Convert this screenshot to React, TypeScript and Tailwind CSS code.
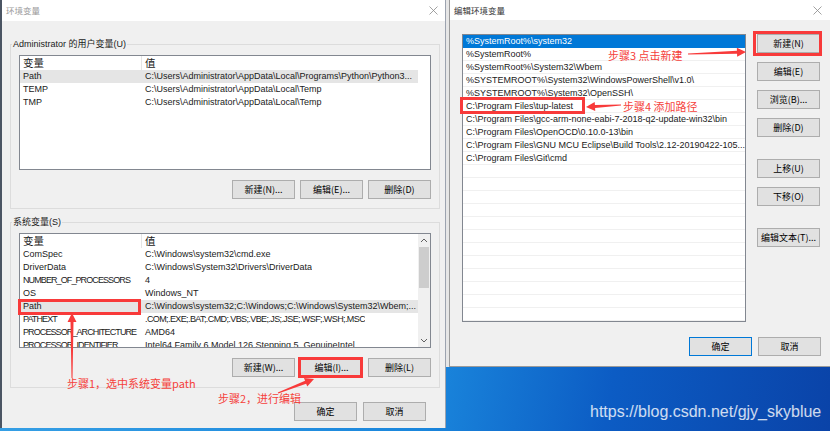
import React from "react";

type Row = [string, string];

const userVars: Row[] = [
  ["Path", "C:\\Users\\Administrator\\AppData\\Local\\Programs\\Python\\Python3..."],
  ["TEMP", "C:\\Users\\Administrator\\AppData\\Local\\Temp"],
  ["TMP", "C:\\Users\\Administrator\\AppData\\Local\\Temp"],
];

const sysVars: Row[] = [
  ["ComSpec", "C:\\Windows\\system32\\cmd.exe"],
  ["DriverData", "C:\\Windows\\System32\\Drivers\\DriverData"],
  ["NUMBER_OF_PROCESSORS", "4"],
  ["OS", "Windows_NT"],
  ["Path", "C:\\Windows\\system32;C:\\Windows;C:\\Windows\\System32\\Wbem;..."],
  ["PATHEXT", ".COM;.EXE;.BAT;.CMD;.VBS;.VBE;.JS;.JSE;.WSF;.WSH;.MSC"],
  ["PROCESSOR_ARCHITECTURE", "AMD64"],
  ["PROCESSOR_IDENTIFIER", "Intel64 Family 6 Model 126 Stepping 5, GenuineIntel"],
];

const pathList = [
  "%SystemRoot%\\system32",
  "%SystemRoot%",
  "%SystemRoot%\\System32\\Wbem",
  "%SYSTEMROOT%\\System32\\WindowsPowerShell\\v1.0\\",
  "%SYSTEMROOT%\\System32\\OpenSSH\\",
  "C:\\Program Files\\tup-latest",
  "C:\\Program Files\\gcc-arm-none-eabi-7-2018-q2-update-win32\\bin",
  "C:\\Program Files\\OpenOCD\\0.10.0-13\\bin",
  "C:\\Program Files\\GNU MCU Eclipse\\Build Tools\\2.12-20190422-105...",
  "C:\\Program Files\\Git\\cmd",
  ...Array(12).fill(""),
];

// all-caps strings render wider in Liberation Sans than in the dialog font
const tight = (s: string) => s.length > 6 && s === s.toUpperCase() && /[A-Z]/.test(s);

function Button({ label, primary }: { label: string; primary?: boolean }) {
  return (
    <div
      className={`flex h-[19px] w-[63px] shrink-0 items-center justify-center border bg-[#e1e1e1] font-['Noto_Sans_CJK_SC',sans-serif] text-[9px] leading-none text-black ${
        primary ? "border-[#0078d7]" : "border-[#adadad]"
      }`}
    >
      {label}
    </div>
  );
}

function CloseX() {
  return (
    <svg width="9" height="9" viewBox="0 0 9 9">
      <path d="M0.5 0.5L8.5 8.5M8.5 0.5L0.5 8.5" stroke="#8a8a8a" strokeWidth="0.8" />
    </svg>
  );
}

function Chevron({ up }: { up?: boolean }) {
  return (
    <svg width="8" height="5" viewBox="0 0 8 5">
      <path d={up ? "M1 4L4 1L7 4" : "M1 1L4 4L7 1"} stroke="#606060" strokeWidth="1" fill="none" />
    </svg>
  );
}

function Scrollbar() {
  return (
    <div className="flex w-[12px] shrink-0 flex-col bg-[#f0f0f0]">
      <div className="flex h-[13px] items-center justify-center">
        <Chevron up />
      </div>
      <div className="mx-[1px] h-[41px] bg-[#cdcdcd]" />
      <div className="flex-1" />
      <div className="flex h-[13px] items-center justify-center">
        <Chevron />
      </div>
    </div>
  );
}

function VarTable({ rows, selected, scroll }: { rows: Row[]; selected: number; scroll?: boolean }) {
  return (
    <div className="flex h-[115px] w-[412px] overflow-hidden border border-[#828790] bg-white">
      <div className="w-[398px] shrink-0">
        <div className="flex h-[14px] items-center font-['Noto_Sans_CJK_SC',sans-serif] text-[10.5px]">
          <div className="h-full w-[122px] border-r border-[#e5e5e5] pl-[3px] leading-[14px]">变量</div>
          <div className="pl-[3px] leading-[14px]">值</div>
        </div>
        {rows.map(([k, v], i) => (
          <div
            key={k}
            className={`flex h-[13px] items-center whitespace-nowrap leading-[13px] ${
              i === selected ? "bg-[#e5e5e5]" : ""
            }`}
          >
            <div className={`w-[122px] shrink-0 overflow-hidden pl-[3px] ${tight(k) ? "tracking-[-0.9px]" : ""}`}>
              {k}
            </div>
            <div className={`overflow-hidden pl-[3px] ${tight(v) ? "tracking-[-0.6px]" : ""}`}>{v}</div>
          </div>
        ))}
      </div>
      {scroll && <Scrollbar />}
    </div>
  );
}

function arrowPts(x1: number, y1: number, x2: number, y2: number) {
  const dx = x2 - x1;
  const dy = y2 - y1;
  const len = Math.hypot(dx, dy);
  const ux = dx / len;
  const uy = dy / len;
  const nx = -uy;
  const ny = ux;
  const head = 9;
  const hw = 4.5;
  const tail = 0.5;
  const neck = 1.5;
  const bx = x2 - ux * head;
  const by = y2 - uy * head;
  const pts = [
    [x1 + nx * tail, y1 + ny * tail],
    [bx + nx * neck, by + ny * neck],
    [bx + nx * hw, by + ny * hw],
    [x2, y2],
    [bx - nx * hw, by - ny * hw],
    [bx - nx * neck, by - ny * neck],
    [x1 - nx * tail, y1 - ny * tail],
  ];
  return pts.map((p) => p.join(",")).join(" ");
}

export default function App() {
  return (
    <div className="relative h-[431px] w-[830px] overflow-hidden bg-[linear-gradient(100deg,#3aa3e6_0%,#1a86dc_55%,#0c5cc4_75%,#0a43a8_100%)] font-['Liberation_Sans','Noto_Sans_CJK_SC',sans-serif] text-[9px] text-[#1a1a1a]">
      {/* 环境变量 window */}
      <div className="absolute left-0 top-0 flex h-[428px] w-[446px] flex-col border-l-2 border-r border-l-[#4b5563] border-r-[#9ca3af] bg-[#f0f0f0]">
        <div className="flex h-[21px] shrink-0 items-center justify-between bg-white pl-[4px] pr-[7px]">
          <span className="font-['Noto_Sans_CJK_SC',sans-serif] text-[8.5px] text-[#9a9a9a]">环境变量</span>
          <CloseX />
        </div>

        <div className="flex flex-col pl-[8px]">
          {/* user vars */}
          <div className="mt-[23px] flex w-[430px] flex-col border border-[#dcdcdc] px-[8px] pb-[9px]">
            <span className="-mt-[8px] ml-[-7px] w-fit bg-[#f0f0f0] px-[1px] leading-[14px]">
              Administrator 的用户变量(U)
            </span>
            <div className="mt-[4px]">
              <VarTable rows={userVars} selected={0} />
            </div>
            <div className="mt-[10px] flex justify-end gap-[5px]">
              <Button label="新建(N)..." />
              <Button label="编辑(E)..." />
              <Button label="删除(D)" />
            </div>
          </div>

          {/* system vars */}
          <div className="mt-[13px] flex w-[430px] flex-col border border-[#dcdcdc] px-[8px] pb-[10px]">
            <span className="-mt-[8px] ml-[-7px] w-fit bg-[#f0f0f0] px-[1px] leading-[14px]">系统变量(S)</span>
            <div className="mt-[4px]">
              <VarTable rows={sysVars} selected={4} scroll />
            </div>
            <div className="mt-[10px] flex justify-end gap-[5px]">
              <Button label="新建(W)..." />
              <Button label="编辑(I)..." />
              <Button label="删除(L)" />
            </div>
          </div>

          <div className="mt-[14px] flex w-[430px] justify-end gap-[6px] pr-[14px]">
            <Button label="确定" />
            <Button label="取消" />
          </div>
        </div>
      </div>

      {/* 编辑环境变量 window */}
      <div className="absolute left-[446px] top-0 flex h-[367px] w-[384px]">
        <div className="w-[3px] bg-[#e6e6e6]" />
        <div className="flex flex-1 flex-col border-b border-l border-[#9a9a9a] bg-[#f0f0f0]">
          <div className="flex h-[20px] shrink-0 items-center justify-between bg-white pl-[4px] pr-[8px]">
            <span className="font-['Noto_Sans_CJK_SC',sans-serif] text-[8.5px] text-[#333]">编辑环境变量</span>
            <CloseX />
          </div>
          <div className="flex gap-[11px] pl-[12px] pt-[14px]">
            <div className="h-[288px] w-[284px] overflow-hidden border border-[#828790] bg-white">
              {pathList.map((p, i) => (
                <div
                  key={i}
                  className={`h-[13px] overflow-hidden whitespace-nowrap border-b pl-[3px] leading-[12px] ${
                    i === 0 ? "border-[#0078d7] bg-[#0078d7] text-white" : "border-[#f0f0f0]"
                  }`}
                >
                  {p}
                </div>
              ))}
            </div>
            <div className="flex flex-col gap-[9px]">
              <Button label="新建(N)" />
              <Button label="编辑(E)" />
              <Button label="浏览(B)..." />
              <Button label="删除(D)" />
              <div className="mt-[13px]">
                <Button label="上移(U)" />
              </div>
              <Button label="下移(O)" />
              <div className="mt-[13px]">
                <Button label="编辑文本(T)..." />
              </div>
            </div>
          </div>
          <div className="mt-[15px] flex justify-end gap-[6px] pr-[9px]">
            <Button label="确定" primary />
            <Button label="取消" />
          </div>
        </div>
      </div>

      {/* annotations */}
      <div className="absolute left-[18px] top-[299px] h-[16px] w-[123px] border-[3px] border-[#f83a3a]" />
      <div className="absolute left-[298px] top-[357px] h-[21px] w-[65px] border-[3px] border-[#f83a3a]" />
      <div className="absolute left-[460px] top-[97px] h-[17px] w-[125px] border-[3px] border-[#f83a3a]" />
      <div className="absolute left-[753px] top-[31px] h-[25px] w-[69px] border-[3px] border-[#f83a3a]" />

      <svg className="pointer-events-none absolute left-0 top-0" width="830" height="431">
        <polygon points={arrowPts(72, 378, 72, 313)} fill="#f83a3a" />
        <polygon points={arrowPts(278, 393, 314, 379)} fill="#f83a3a" />
        <polygon points={arrowPts(688, 54, 746, 52)} fill="#f83a3a" />
        <polygon points={arrowPts(621, 105, 586, 107)} fill="#f83a3a" />
      </svg>

      <div className="font-['Noto_Sans_CJK_SC',sans-serif] text-[11px] leading-[14px] text-[#f5413b]">
        <span className="absolute left-[67px] top-[376px]">步骤1，选中系统变量path</span>
        <span className="absolute left-[218px] top-[391px]">步骤2，进行编辑</span>
        <span className="absolute left-[608px] top-[48px]">步骤3 点击新建</span>
        <span className="absolute left-[623px] top-[99px]">步骤4 添加路径</span>
      </div>

      <span className="absolute left-[590px] top-[403px] font-['Liberation_Sans',sans-serif] text-[16px] leading-[18px] text-white/80">
        https://blog.csdn.net/gjy_skyblue
      </span>
    </div>
  );
}
